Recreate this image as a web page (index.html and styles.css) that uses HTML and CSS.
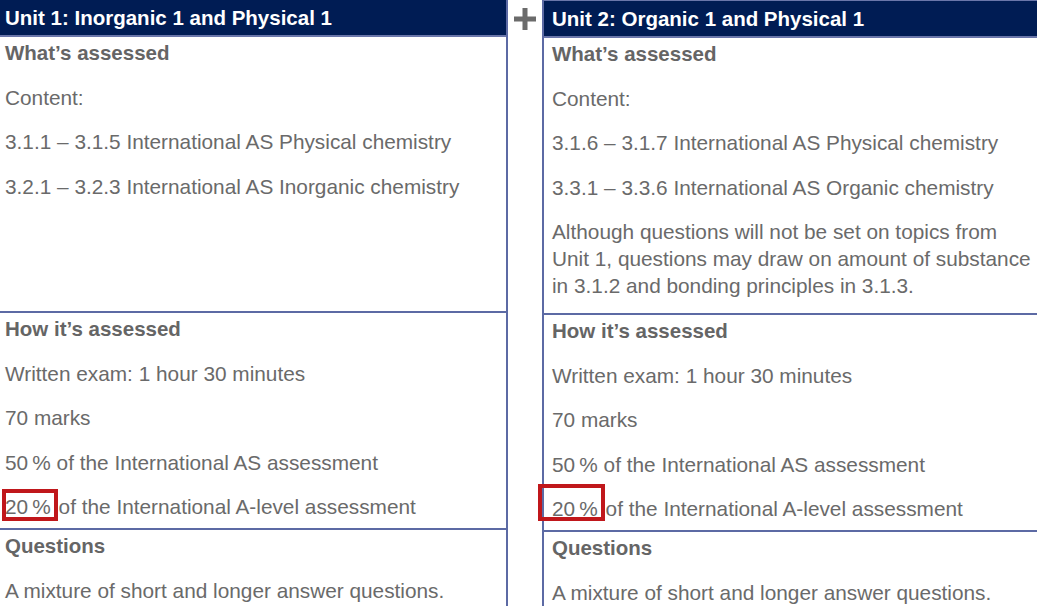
FILE: index.html
```html
<!DOCTYPE html>
<html lang="en">
<head>
<meta charset="utf-8">
<title>Units</title>
<link rel="stylesheet" href="styles.css">
</head>
<body>
<div class="page">
  <section class="panel panel-left">
    <h2 class="unit-head">Unit 1: Inorganic 1 and Physical 1</h2>
    <div class="sec sec-what">
      <h3 class="sec-title">What’s assessed</h3>
      <p>Content:</p>
      <p>3.1.1 – 3.1.5 International AS Physical chemistry</p>
      <p>3.2.1 – 3.2.3 International AS Inorganic chemistry</p>
    </div>
    <div class="sec sec-how">
      <h3 class="sec-title">How it’s assessed</h3>
      <p>Written exam: 1 hour 30 minutes</p>
      <p>70 marks</p>
      <p>50&#8201;% of the International AS assessment</p>
      <p><span class="mark mark-left">20&#8201;%</span> of the International A-level assessment</p>
    </div>
    <div class="sec sec-q">
      <h3 class="sec-title">Questions</h3>
      <p>A mixture of short and longer answer questions.</p>
    </div>
  </section>
  <div class="plus">
    <svg width="22" height="22" viewBox="0 0 22 22" aria-hidden="true"><rect x="8.5" y="0" width="5" height="22" fill="#6b6b6b"/><rect x="0" y="8.5" width="22" height="5" fill="#6b6b6b"/></svg>
  </div>
  <section class="panel panel-right">
    <h2 class="unit-head">Unit 2: Organic 1 and Physical 1</h2>
    <div class="sec sec-what">
      <h3 class="sec-title">What’s assessed</h3>
      <p>Content:</p>
      <p>3.1.6 – 3.1.7 International AS Physical chemistry</p>
      <p>3.3.1 – 3.3.6 International AS Organic chemistry</p>
      <p>Although questions will not be set on topics from<br>Unit 1, questions may draw on amount of substance<br>in 3.1.2 and bonding principles in 3.1.3.</p>
    </div>
    <div class="sec sec-how">
      <h3 class="sec-title">How it’s assessed</h3>
      <p>Written exam: 1 hour 30 minutes</p>
      <p>70 marks</p>
      <p>50&#8201;% of the International AS assessment</p>
      <p><span class="mark mark-right">20&#8201;%</span> of the International A-level assessment</p>
    </div>
    <div class="sec sec-q">
      <h3 class="sec-title">Questions</h3>
      <p>A mixture of short and longer answer questions.</p>
    </div>
  </section>
</div>
</body>
</html>
```

FILE: styles.css
```css
html, body {
  margin: 0;
  padding: 0;
  background: #ffffff;
  overflow: hidden;
}
body {
  font-family: "Liberation Sans", Arial, Helvetica, sans-serif;
  color: #6a6a6a;
  width: 1037px;
  height: 606px;
}
.page {
  display: flex;
  align-items: flex-start;
}
.panel {
  box-sizing: border-box;
  border-top: 2px solid #6a76aa;
  flex: none;
}
.panel-left {
  width: 508px;
  margin-top: -2px;
  border-right: 2px solid #5c6aa4;
}
.panel-right {
  width: 495px;
  margin-top: -1px;
  border-left: 2px solid #5c6aa4;
}
.plus {
  flex: none;
  width: 34px;
  display: flex;
  justify-content: center;
  padding-top: 8px;
}
.plus svg { display: block; }
.unit-head {
  margin: 0;
  box-sizing: border-box;
  height: 37px;
  line-height: 35px;
  background: #001c54;
  border-bottom: 2px solid #6a76aa;
  color: #ffffff;
  font-size: 20.5px;
  font-weight: bold;
  white-space: nowrap;
}
.panel-left .unit-head { padding-left: 5px; }
.panel-right .unit-head { padding-left: 8px; }
.sec {
  box-sizing: border-box;
  border-bottom: 2px solid #5c6aa4;
  padding: 2px 10px 8px 5px;
}
.panel-right .sec { padding-left: 8px; }
.panel-left .sec-what { height: 276px; }
.panel-right .sec-what { height: 277px; }
.sec-q { border-bottom: none; }
.sec-title {
  margin: 0;
  font-size: 20.5px;
  line-height: 27px;
  font-weight: bold;
  color: #656565;
  white-space: nowrap;
}
.sec p {
  margin: 17.6px 0 0;
  font-size: 20.8px;
  line-height: 27px;
  white-space: nowrap;
}
.mark {
  position: relative;
  margin-right: 2px;
}
.mark::after {
  content: "";
  position: absolute;
  border: 4px solid #c0171b;
  box-sizing: border-box;
}
.mark-left::after {
  left: -3px;
  right: -7px;
  top: -6px;
  bottom: -3px;
}
.mark-right::after {
  left: -14px;
  right: -7px;
  top: -13px;
  bottom: -1px;
}
```
